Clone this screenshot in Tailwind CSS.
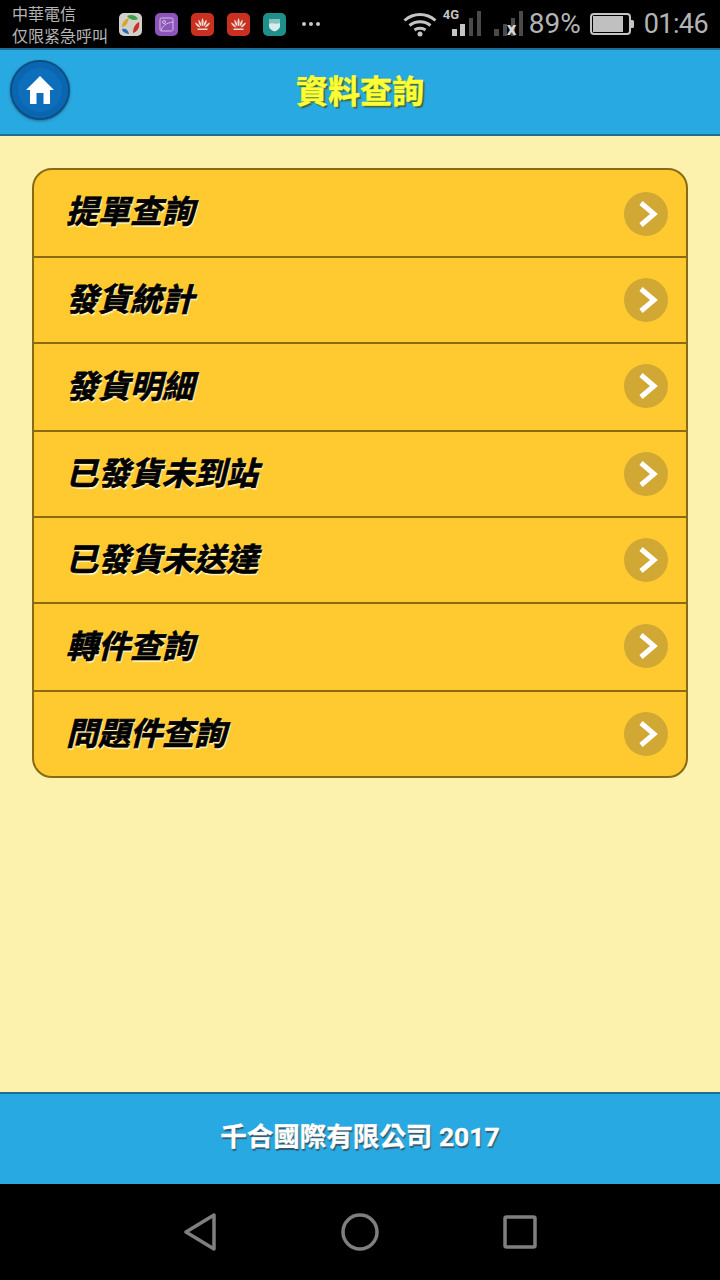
<!DOCTYPE html>
<html lang="zh-Hant">
<head>
    <meta charset="UTF-8">
    <meta name="viewport" content="width=device-width, initial-scale=1.0">
    <title>資料查詢</title>
    <script src="https://cdn.jsdelivr.net/npm/@tailwindcss/browser@4"></script>
</head>
<body class="w-[720px] h-[1280px] overflow-hidden bg-black font-['Roboto','Noto_Sans_CJK_TC',sans-serif]">
    <div class="flex flex-col h-[1280px]">
        <!-- Status Bar -->
        <div class="h-[48px] shrink-0 bg-black flex items-center pl-[12px] pr-[12px] text-[#b4b4b4]">
            <div class="w-[107px] text-[16px] leading-[22px] pt-[3px]">
                <div>中華電信</div>
                <div class="whitespace-nowrap">仅限紧急呼叫</div>
            </div>
            <div class="flex items-center gap-[13px]">
                <svg width="23" height="23" viewBox="0 0 23 23"><rect width="23" height="23" rx="5" fill="#d2d0c8"/><path d="M3 14c0-5 3-8 7-9-1 4-2 8-7 9z" fill="#d9a52c"/><path d="M9 21c-4-1-6-3-6-5 3-1 6 0 7 5z" fill="#2a6db0"/><path d="M8 3c4-2 9-1 11 3-4 2-8 1-11-3z" fill="#3f9e4d"/><path d="M20 9c1 5-1 9-6 11 0-5 2-9 6-11z" fill="#c5332a"/></svg>
                <svg width="23" height="23" viewBox="0 0 23 23"><rect width="23" height="23" rx="5" fill="#8d55ba"/><rect x="5" y="5" width="13" height="13" rx="1.500" fill="none" stroke="#d7bfe8"/><circle cx="9" cy="9" r="1.500" fill="none" stroke="#d7bfe8"/><path d="M6 18c1-5 5-8 12-9" fill="none" stroke="#d7bfe8"/></svg>
                <svg width="23" height="23" viewBox="0 0 23 23"><rect width="23" height="23" rx="5" fill="#c9301f"/><g fill="#f0ddd6"><path d="M11.500 5c1.500 2.500 1.500 6 0 8.500-1.500-2.500-1.500-6 0-8.500z"/><path d="M7.500 6.500c2 1.500 3 4.500 3 7-2.500-1.500-3.500-4.500-3-7z"/><path d="M15.500 6.500c-2 1.500-3 4.500-3 7 2.500-1.500 3.500-4.500 3-7z"/><path d="M4 9.500c2.500.5 4.500 3 5.500 5-3-.2-5-2.500-5.500-5z"/><path d="M19 9.500c-2.500.5-4.500 3-5.500 5 3-.2 5-2.500 5.500-5z"/><rect x="6.500" y="15.500" width="10" height="1.500"/></g></svg>
                <svg width="23" height="23" viewBox="0 0 23 23"><rect width="23" height="23" rx="5" fill="#c9301f"/><g fill="#f0ddd6"><path d="M11.500 5c1.500 2.500 1.500 6 0 8.500-1.500-2.500-1.500-6 0-8.500z"/><path d="M7.500 6.500c2 1.500 3 4.500 3 7-2.500-1.500-3.500-4.500-3-7z"/><path d="M15.500 6.500c-2 1.500-3 4.500-3 7 2.500-1.500 3.500-4.500 3-7z"/><path d="M4 9.500c2.500.5 4.500 3 5.500 5-3-.2-5-2.500-5.500-5z"/><path d="M19 9.500c-2.500.5-4.500 3-5.500 5 3-.2 5-2.500 5.500-5z"/><rect x="6.500" y="15.500" width="10" height="1.500"/></g></svg>
                <svg width="23" height="23" viewBox="0 0 23 23"><rect width="23" height="23" rx="5" fill="#1f8f8c"/><path d="M6 6h11v7c0 3-3 4.500-5.500 5.500C9 17.500 6 16 6 13z" fill="#d8ecea"/><path d="M6 11c3-2 7 1 11-1V6H6z" fill="#1f8f8c" opacity=".45"/></svg>
                <div class="flex gap-[3px] ml-[3px]">
                    <span class="w-[4px] h-[4px] rounded-full bg-[#c8c8c8]"></span>
                    <span class="w-[4px] h-[4px] rounded-full bg-[#c8c8c8]"></span>
                    <span class="w-[4px] h-[4px] rounded-full bg-[#c8c8c8]"></span>
                </div>
            </div>
            <div class="ml-auto flex items-center">
                <svg width="34" height="26" viewBox="0 0 34 26" fill="none" stroke="#c4c4c4" stroke-width="3"><path d="M1.500 9.500c9-8 22-8 31 0"/><path d="M6.500 14.500c6-5 15-5 21 0"/><path d="M11.500 19c3-2.400 8-2.400 11 0"/><circle cx="17" cy="23" r="2.500" fill="#c4c4c4" stroke="none"/></svg>
                <div class="relative w-[40px] h-[36px] ml-[5px]">
                    <span class="absolute left-[1px] top-[2px] text-[13px] leading-[13px] font-bold text-[#c4c4c4]">4G</span>
                    <div class="absolute left-[10px] bottom-[6px] flex items-end">
                        <span class="w-[5px] h-[7px] bg-[#c4c4c4]"></span>
                        <span class="w-[5px] h-[12px] ml-[3px] bg-[#c4c4c4]"></span>
                        <span class="w-[4px] h-[18px] ml-[4px] bg-[#4a4a4a]"></span>
                        <span class="w-[4px] h-[25px] ml-[4px] bg-[#4a4a4a]"></span>
                    </div>
                </div>
                <div class="relative w-[30px] h-[36px] ml-[12px]">
                    <div class="absolute left-0 bottom-[6px] flex items-end">
                        <span class="w-[5px] h-[7px] bg-[#4a4a4a]"></span>
                        <span class="w-[4px] h-[12px] ml-[4px] bg-[#4a4a4a]"></span>
                        <span class="w-[4px] h-[18px] ml-[4px] bg-[#4a4a4a]"></span>
                        <span class="w-[4px] h-[25px] ml-[4px] bg-[#4a4a4a]"></span>
                    </div>
                    <span class="absolute left-[13px] bottom-[4px] text-[19px] leading-[19px] font-bold text-[#d8d8d8]">x</span>
                </div>
                <span class="text-[28px] leading-none text-[#b4b4b4] ml-[5px]">89%</span>
                <svg class="ml-[9px]" width="44" height="22" viewBox="0 0 44 22"><rect x="1" y="1" width="39" height="20" rx="3" fill="none" stroke="#c4c4c4" stroke-width="2"/><rect x="3" y="3" width="30" height="16" fill="#c0c0c0"/><path d="M41 7h1.500A1.500 1.500 0 0 1 44 8.500v5a1.500 1.500 0 0 1-1.500 1.500H41z" fill="#c4c4c4"/></svg>
                <span class="text-[27px] leading-none tracking-[-0.6px] text-[#b4b4b4] ml-[10px]">01:46</span>
            </div>
        </div>

        <!-- Header -->
        <div class="relative h-[88px] shrink-0 bg-[#29a9e1] border-t-[2px] border-b-[2px] border-[#1f6d94] flex items-center justify-center">
            <button class="absolute left-[10px] top-[10px] w-[60px] h-[60px] rounded-full bg-[#0d6fbc] border-[2px] border-[#0b4f85] flex items-center justify-center shadow-[0_1px_3px_rgba(0,0,0,0.35),inset_0_0_0_6px_#0a66b0]">
                <svg width="28" height="28" viewBox="0 0 28 28" fill="#fff"><path d="M14 0 0 14h4v14h6.500V17h7v11H24V14h4z"/></svg>
            </button>
            <h1 class="text-[32px] leading-none font-bold text-[#ffff33] [-webkit-text-stroke:0.5px_#ffff33] [text-shadow:2px_2px_1px_#3f6b45]">資料查詢</h1>
        </div>

        <!-- Menu -->
        <div class="flex-1 bg-[#fdf1ae] pt-[32px] px-[32px]">
            <div class="border-[2px] border-[#8a6b14] rounded-[20px] bg-[#ffca2f] overflow-hidden">
                <div class="h-[88px] flex items-center justify-between pl-[32px] pr-[18px] border-b-[2px] border-[#8a6b14]">
                    <span class="text-[32px] leading-none font-bold italic text-black mb-[3px] [-webkit-text-stroke:0.7px_#000] [text-shadow:1px_2px_1px_#fff3c0]">提單查詢</span>
                    <span class="w-[44px] h-[44px] mt-[2px] rounded-full bg-[#d1a834] flex items-center justify-center"><svg width="26" height="28" viewBox="0 0 26 28" fill="none" stroke="#fff" stroke-width="5"><path d="M8 3l13 11L8 25"/></svg></span>
                </div>
                <div class="h-[86px] flex items-center justify-between pl-[32px] pr-[18px] border-b-[2px] border-[#8a6b14]">
                    <span class="text-[32px] leading-none font-bold italic text-black [-webkit-text-stroke:0.7px_#000] [text-shadow:1px_2px_1px_#fff3c0]">發貨統計</span>
                    <span class="w-[44px] h-[44px] rounded-full bg-[#d1a834] flex items-center justify-center"><svg width="26" height="28" viewBox="0 0 26 28" fill="none" stroke="#fff" stroke-width="5"><path d="M8 3l13 11L8 25"/></svg></span>
                </div>
                <div class="h-[88px] flex items-center justify-between pl-[32px] pr-[18px] border-b-[2px] border-[#8a6b14]">
                    <span class="text-[32px] leading-none font-bold italic text-black [-webkit-text-stroke:0.7px_#000] [text-shadow:1px_2px_1px_#fff3c0]">發貨明細</span>
                    <span class="w-[44px] h-[44px] mb-[2px] rounded-full bg-[#d1a834] flex items-center justify-center"><svg width="26" height="28" viewBox="0 0 26 28" fill="none" stroke="#fff" stroke-width="5"><path d="M8 3l13 11L8 25"/></svg></span>
                </div>
                <div class="h-[86px] flex items-center justify-between pl-[32px] pr-[18px] border-b-[2px] border-[#8a6b14]">
                    <span class="text-[32px] leading-none font-bold italic text-black [-webkit-text-stroke:0.7px_#000] [text-shadow:1px_2px_1px_#fff3c0]">已發貨未到站</span>
                    <span class="w-[44px] h-[44px] rounded-full bg-[#d1a834] flex items-center justify-center"><svg width="26" height="28" viewBox="0 0 26 28" fill="none" stroke="#fff" stroke-width="5"><path d="M8 3l13 11L8 25"/></svg></span>
                </div>
                <div class="h-[86px] flex items-center justify-between pl-[32px] pr-[18px] border-b-[2px] border-[#8a6b14]">
                    <span class="text-[32px] leading-none font-bold italic text-black [-webkit-text-stroke:0.7px_#000] [text-shadow:1px_2px_1px_#fff3c0]">已發貨未送達</span>
                    <span class="w-[44px] h-[44px] rounded-full bg-[#d1a834] flex items-center justify-center"><svg width="26" height="28" viewBox="0 0 26 28" fill="none" stroke="#fff" stroke-width="5"><path d="M8 3l13 11L8 25"/></svg></span>
                </div>
                <div class="h-[88px] flex items-center justify-between pl-[32px] pr-[18px] border-b-[2px] border-[#8a6b14]">
                    <span class="text-[32px] leading-none font-bold italic text-black [-webkit-text-stroke:0.7px_#000] [text-shadow:1px_2px_1px_#fff3c0]">轉件查詢</span>
                    <span class="w-[44px] h-[44px] mb-[2px] rounded-full bg-[#d1a834] flex items-center justify-center"><svg width="26" height="28" viewBox="0 0 26 28" fill="none" stroke="#fff" stroke-width="5"><path d="M8 3l13 11L8 25"/></svg></span>
                </div>
                <div class="h-[84px] flex items-center justify-between pl-[32px] pr-[18px]">
                    <span class="text-[32px] leading-none font-bold italic text-black [-webkit-text-stroke:0.7px_#000] [text-shadow:1px_2px_1px_#fff3c0]">問題件查詢</span>
                    <span class="w-[44px] h-[44px] rounded-full bg-[#d1a834] flex items-center justify-center"><svg width="26" height="28" viewBox="0 0 26 28" fill="none" stroke="#fff" stroke-width="5"><path d="M8 3l13 11L8 25"/></svg></span>
                </div>
            </div>
        </div>

        <!-- Footer -->
        <div class="h-[92px] shrink-0 bg-[#29a9e1] border-t-[2px] border-[#1f6d94] flex items-center justify-center">
            <span class="text-[26.5px] leading-none font-bold text-white mb-[4px] [-webkit-text-stroke:0.3px_#fff] [text-shadow:1px_2px_1px_#33566b]">千合國際有限公司 2017</span>
        </div>

        <!-- Nav Bar -->
        <div class="h-[96px] shrink-0 bg-black grid grid-cols-[160px_160px_160px] justify-center items-center">
            <svg class="justify-self-center" width="36" height="38" viewBox="0 0 36 38" fill="none" stroke="#7f7f7f" stroke-width="3.500" stroke-linejoin="round"><path d="M32 2v34L4 19z"/></svg>
            <svg class="justify-self-center" width="38" height="38" viewBox="0 0 38 38" fill="none" stroke="#7f7f7f" stroke-width="3.500"><circle cx="19" cy="19" r="17"/></svg>
            <svg class="justify-self-center" width="34" height="34" viewBox="0 0 34 34" fill="none" stroke="#7f7f7f" stroke-width="3.500" stroke-linejoin="round"><rect x="2" y="2" width="30" height="30" rx="1.500"/></svg>
        </div>
    </div>
</body>
</html>
